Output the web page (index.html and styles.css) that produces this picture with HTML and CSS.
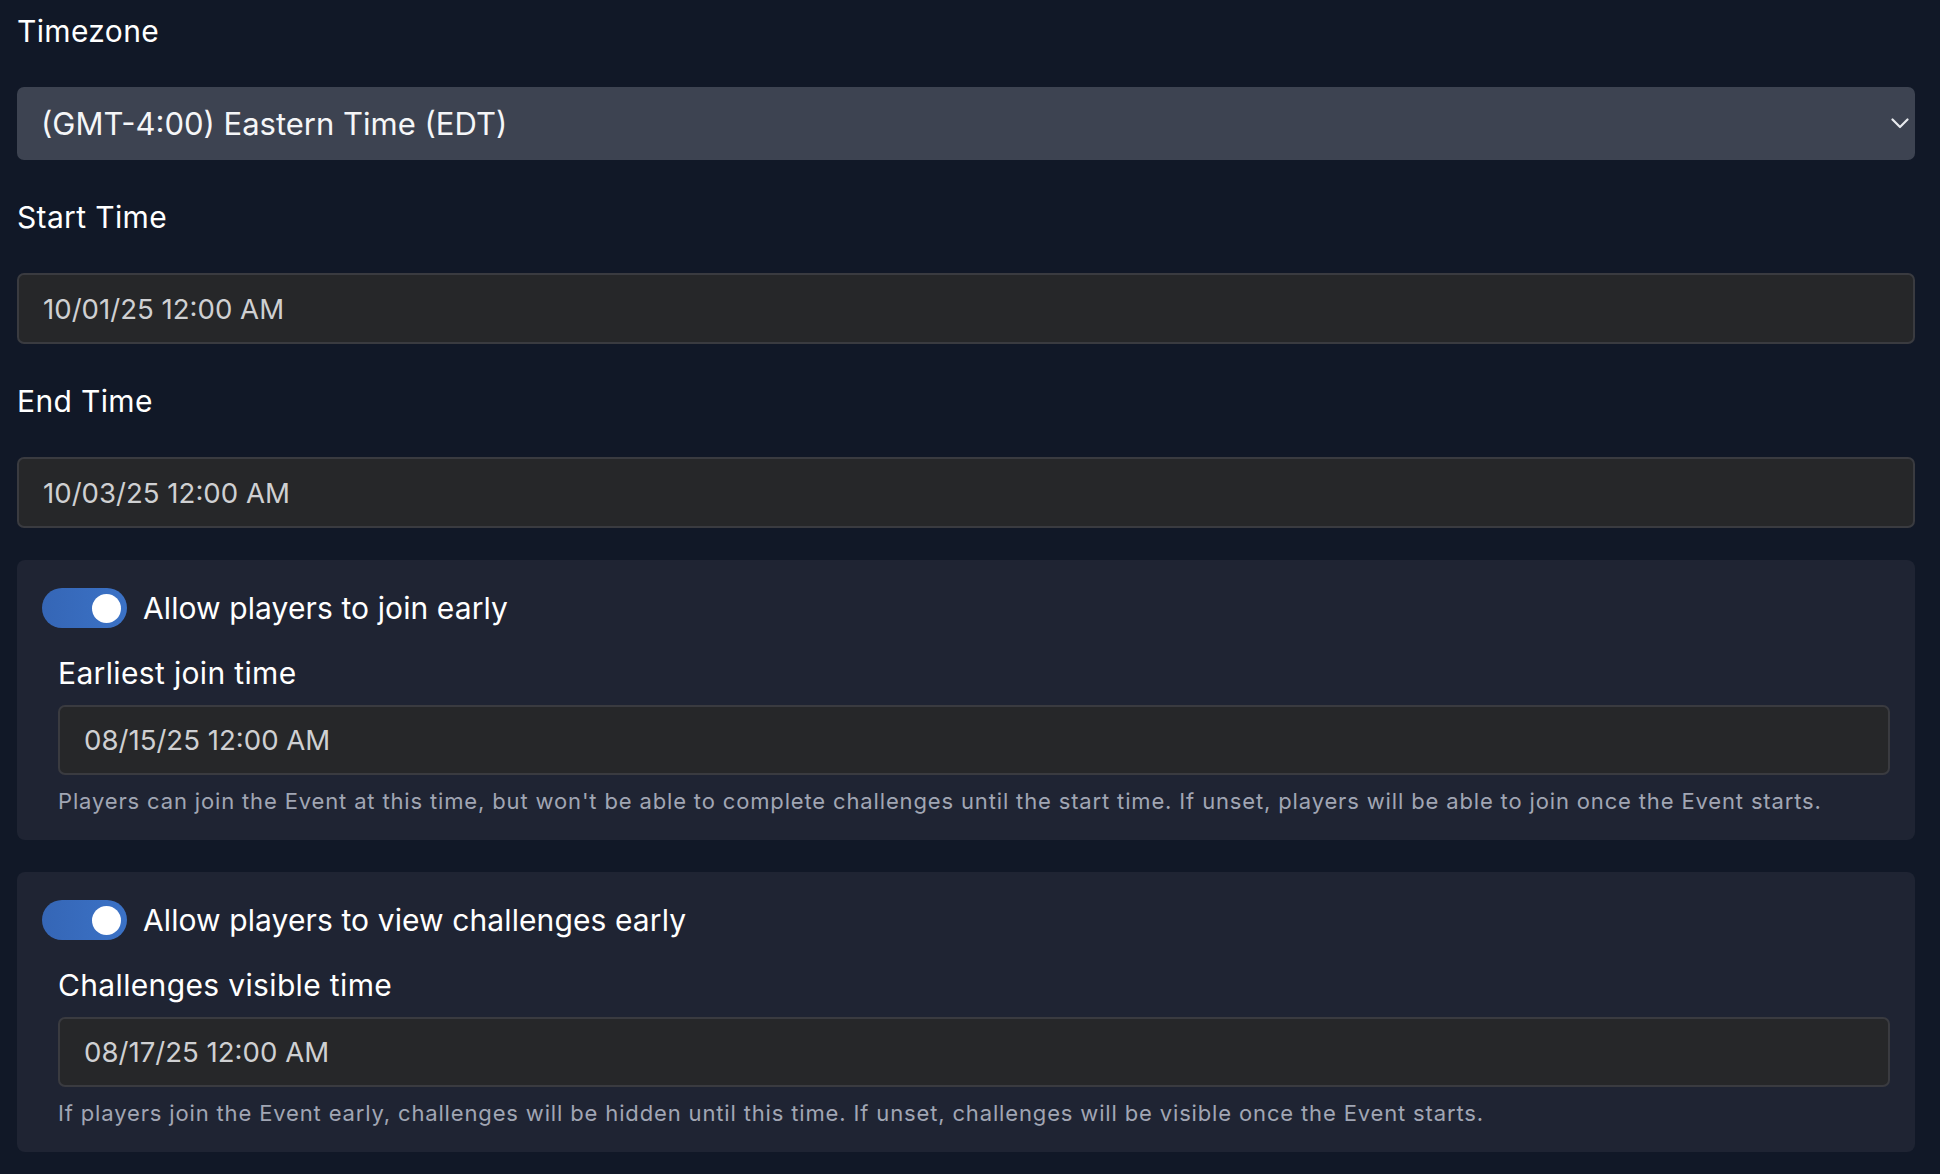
FILE: index.html
```html
<!DOCTYPE html>
<html lang="en">
<head>
  <meta charset="UTF-8">
  <meta name="viewport" content="width=device-width, initial-scale=1.0">
  <title>Event Schedule</title>
  <link rel="stylesheet" href="styles.css">
</head>
<body>
  <form class="schedule-form">
    <div class="field">
      <label for="timezone">Timezone</label>
      <div class="select-wrap">
        <select id="timezone">
          <option>(GMT-4:00) Eastern Time (EDT)</option>
        </select>
        <svg class="chevron" width="18" height="11" viewBox="0 0 18 11">
          <path d="M1.5 1.5 L9 9 L16.5 1.5" fill="none" stroke="#e8eaee" stroke-width="2.2" stroke-linecap="round" stroke-linejoin="round"/>
        </svg>
      </div>
    </div>

    <div class="field">
      <label for="startTime">Start Time</label>
      <input type="text" id="startTime" value="10/01/25 12:00 AM">
    </div>

    <div class="field last">
      <label for="endTime">End Time</label>
      <input type="text" id="endTime" value="10/03/25 12:00 AM">
    </div>

    <div class="option-card">
      <label class="switch-row">
        <span class="switch on"></span>
        Allow players to join early
      </label>
      <div class="option-body">
        <label for="joinTime">Earliest join time</label>
        <input type="text" id="joinTime" value="08/15/25 12:00 AM">
        <p class="help">Players can join the Event at this time, but won't be able to complete challenges until the start time. If unset, players will be able to join once the Event starts.</p>
      </div>
    </div>

    <div class="option-card">
      <label class="switch-row">
        <span class="switch on"></span>
        Allow players to view challenges early
      </label>
      <div class="option-body">
        <label for="visibleTime">Challenges visible time</label>
        <input type="text" id="visibleTime" value="08/17/25 12:00 AM">
        <p class="help">If players join the Event early, challenges will be hidden until this time. If unset, challenges will be visible once the Event starts.</p>
      </div>
    </div>
  </form>
</body>
</html>
```

FILE: styles.css
```css
body {
  font-family: Inter, "Noto Sans", sans-serif;
  margin: 0;
  padding: 0;
  background-color: #111827;
  color: #f9fafb;
}
.schedule-form {
  padding: 13px 25px 0 17px;
}
.field {
  margin-bottom: 39px;
}
.field.last {
  margin-bottom: 32px;
}
.field label, .option-body label {
  display: block;
  font-size: 30px;
  line-height: 36px;
  letter-spacing: 0.35px;
  margin-bottom: 38px;
  color: #fff;
}
.select-wrap {
  position: relative;
}
.select-wrap select {
  display: block;
  width: 100%;
  height: 73px;
  padding: 0 60px 0 24px;
  border: none;
  border-radius: 7px;
  background-color: #3d4351;
  color: #f5f6f8;
  font-family: inherit;
  font-size: 31px;
  appearance: none;
  -webkit-appearance: none;
}
.chevron {
  position: absolute;
  right: 6px;
  top: 31px;
}
input[type="text"] {
  display: block;
  box-sizing: border-box;
  width: 100%;
  height: 71px;
  padding: 0 24px;
  border: 2px solid #3a3b40;
  border-radius: 7px;
  background-color: #262729;
  color: #cfd0d2;
  font-family: inherit;
  font-size: 27.6px;
}
.option-card {
  background-color: #1f2433;
  border-radius: 8px;
  padding: 28px 25px 24px;
  margin-bottom: 32px;
}
.switch-row {
  display: flex;
  align-items: center;
  gap: 16px;
  height: 40px;
  font-size: 30px;
  letter-spacing: 0.1px;
  color: #fff;
}
.switch {
  position: relative;
  width: 85px;
  height: 40px;
  border-radius: 20px;
  background: linear-gradient(90deg, #3566b6, #3b72c6);
  flex-shrink: 0;
}
.switch::after {
  content: "";
  position: absolute;
  right: 6px;
  top: 5.5px;
  width: 29px;
  height: 29px;
  border-radius: 50%;
  background-color: #fff;
}
.option-body {
  padding-left: 16px;
  margin-top: 27px;
}
.option-body label {
  margin-bottom: 14px;
}
.option-body input[type="text"] {
  height: 70px;
}
.help {
  margin: 11px 0 0;
  font-size: 22px;
  line-height: 30px;
  letter-spacing: 0.85px;
  color: #a1a6b4;
}
```
